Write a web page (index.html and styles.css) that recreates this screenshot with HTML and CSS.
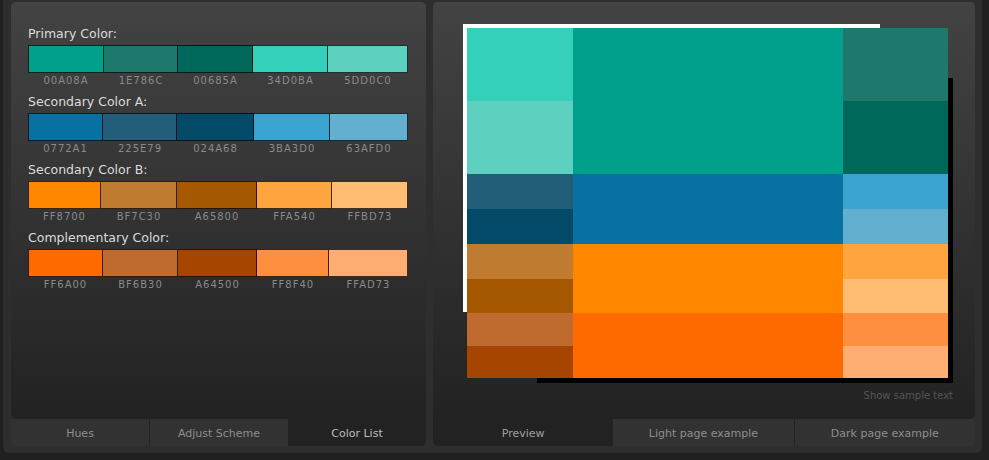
FILE: index.html
```html
<!DOCTYPE html>
<html>
<head>
<meta charset="utf-8">
<link rel="stylesheet" href="styles.css">
</head>
<body>
<div class="frame">
  <section class="panel panel-left">
    <div class="panel-body body-left">
      <div class="group">
        <div class="label">Primary Color:</div>
        <div class="swatches cols-1">
          <div class="cell"><div class="sw" style="background:#00A08A"></div><div class="hex">00A08A</div></div>
          <div class="cell"><div class="sw" style="background:#1E786C"></div><div class="hex">1E786C</div></div>
          <div class="cell"><div class="sw" style="background:#00685A"></div><div class="hex">00685A</div></div>
          <div class="cell"><div class="sw" style="background:#34D0BA"></div><div class="hex">34D0BA</div></div>
          <div class="cell"><div class="sw" style="background:#5DD0C0"></div><div class="hex">5DD0C0</div></div>
        </div>
      </div>
      <div class="group">
        <div class="label">Secondary Color A:</div>
        <div class="swatches cols-2">
          <div class="cell"><div class="sw" style="background:#0772A1"></div><div class="hex">0772A1</div></div>
          <div class="cell"><div class="sw" style="background:#225E79"></div><div class="hex">225E79</div></div>
          <div class="cell"><div class="sw" style="background:#024A68"></div><div class="hex">024A68</div></div>
          <div class="cell"><div class="sw" style="background:#3BA3D0"></div><div class="hex">3BA3D0</div></div>
          <div class="cell"><div class="sw" style="background:#63AFD0"></div><div class="hex">63AFD0</div></div>
        </div>
      </div>
      <div class="group">
        <div class="label">Secondary Color B:</div>
        <div class="swatches cols-3">
          <div class="cell"><div class="sw" style="background:#FF8700"></div><div class="hex">FF8700</div></div>
          <div class="cell"><div class="sw" style="background:#BF7C30"></div><div class="hex">BF7C30</div></div>
          <div class="cell"><div class="sw" style="background:#A65800"></div><div class="hex">A65800</div></div>
          <div class="cell"><div class="sw" style="background:#FFA540"></div><div class="hex">FFA540</div></div>
          <div class="cell"><div class="sw" style="background:#FFBD73"></div><div class="hex">FFBD73</div></div>
        </div>
      </div>
      <div class="group">
        <div class="label">Complementary Color:</div>
        <div class="swatches cols-4">
          <div class="cell"><div class="sw" style="background:#FF6A00"></div><div class="hex">FF6A00</div></div>
          <div class="cell"><div class="sw" style="background:#BF6B30"></div><div class="hex">BF6B30</div></div>
          <div class="cell"><div class="sw" style="background:#A64500"></div><div class="hex">A64500</div></div>
          <div class="cell"><div class="sw" style="background:#FF8F40"></div><div class="hex">FF8F40</div></div>
          <div class="cell"><div class="sw" style="background:#FFAD73"></div><div class="hex">FFAD73</div></div>
        </div>
      </div>
    </div>
    <nav class="tabs">
      <div class="tab sep">Hues</div>
      <div class="tab">Adjust Scheme</div>
      <div class="tab active active-right">Color List</div>
    </nav>
  </section>

  <section class="panel panel-right">
    <div class="panel-body body-right">
      <div class="preview">
        <div class="back-white"></div>
        <div class="back-black"></div>
        <div class="grid">
          <div class="c" style="grid-column:1;grid-row:1;background:#34D0BA"></div>
          <div class="c" style="grid-column:1;grid-row:2;background:#5DD0C0"></div>
          <div class="c" style="grid-column:2;grid-row:1 / 3;background:#00A08A"></div>
          <div class="c" style="grid-column:3;grid-row:1;background:#1E786C"></div>
          <div class="c" style="grid-column:3;grid-row:2;background:#00685A"></div>

          <div class="c" style="grid-column:1;grid-row:3;background:#225E79"></div>
          <div class="c" style="grid-column:1;grid-row:4;background:#024A68"></div>
          <div class="c" style="grid-column:2;grid-row:3 / 5;background:#0772A1"></div>
          <div class="c" style="grid-column:3;grid-row:3;background:#3BA3D0"></div>
          <div class="c" style="grid-column:3;grid-row:4;background:#63AFD0"></div>

          <div class="c" style="grid-column:1;grid-row:5;background:#BF7C30"></div>
          <div class="c" style="grid-column:1;grid-row:6;background:#A65800"></div>
          <div class="c" style="grid-column:2;grid-row:5 / 7;background:#FF8700"></div>
          <div class="c" style="grid-column:3;grid-row:5;background:#FFA540"></div>
          <div class="c" style="grid-column:3;grid-row:6;background:#FFBD73"></div>

          <div class="c" style="grid-column:1;grid-row:7;background:#BF6B30"></div>
          <div class="c" style="grid-column:1;grid-row:8;background:#A64500"></div>
          <div class="c" style="grid-column:2;grid-row:7 / 9;background:#FF6A00"></div>
          <div class="c" style="grid-column:3;grid-row:7;background:#FF8F40"></div>
          <div class="c" style="grid-column:3;grid-row:8;background:#FFAD73"></div>
        </div>
      </div>
      <div class="sample">Show sample text</div>
    </div>
    <nav class="tabs">
      <div class="tab active active-left">Preview</div>
      <div class="tab sep">Light page example</div>
      <div class="tab">Dark page example</div>
    </nav>
  </section>
</div>
</body>
</html>
```

FILE: styles.css
```css
html, body {
  margin: 0;
  padding: 0;
  background: #202020;
  height: 100%;
  overflow: hidden;
}

body {
  font-family: "DejaVu Sans", Verdana, sans-serif;
}

.frame {
  margin-left: 3px;
  width: 979px;
  box-sizing: border-box;
  padding: 2px 7px 7px 8px;
  background: #2e2e2e;
  border-radius: 0 0 6px 6px;
  display: flex;
  gap: 7px;
}

.panel {
  display: flex;
  flex-direction: column;
}

.panel-left { width: 415px; }
.panel-right { width: 542px; }

.panel-body {
  height: 417px;
  box-sizing: border-box;
  background: linear-gradient(#434343, #222222);
  border-radius: 5px;
}

.body-left {
  padding: 25px 18px 0 17px;
  border-bottom-right-radius: 0;
}

.body-right {
  padding: 26px 22px 0 34px;
  border-bottom-left-radius: 0;
  display: flex;
  flex-direction: column;
}

/* swatch groups */
.group { margin-bottom: 8px; }

.label {
  font-size: 12.5px;
  line-height: 14px;
  color: #dcdcdc;
  margin-bottom: 4px;
}

.swatches {
  display: grid;
}

.cols-1 { grid-template-columns: 76fr 74fr 75fr 75fr 80fr; }
.cols-2 { grid-template-columns: 75fr 74fr 77fr 76fr 78fr; }
.cols-3 { grid-template-columns: 73fr 76fr 80fr 75fr 76fr; }
.cols-4 { grid-template-columns: 75fr 75fr 79fr 72fr 79fr; }

.cell { min-width: 0; }

.sw {
  height: 26px;
  border-top: 1px solid rgba(0, 0, 0, 0.75);
  border-bottom: 1px solid rgba(0, 0, 0, 0.75);
  border-right: 1px solid rgba(0, 0, 0, 0.75);
}

.cell:first-child .sw { border-left: 1px solid rgba(0, 0, 0, 0.75); }

.hex {
  margin-top: 2px;
  font-size: 10px;
  line-height: 12px;
  letter-spacing: 1px;
  color: #8a8a8a;
  text-align: center;
}

/* tabs */
.tabs {
  display: flex;
  height: 27px;
  background: #323232;
  border-radius: 0 0 5px 5px;
}

.tab {
  flex: 1;
  display: flex;
  align-items: center;
  justify-content: center;
  font-size: 11px;
  color: #8e8e8e;
  padding-top: 1px;
  box-sizing: border-box;
}

.tab.sep { border-right: 1px solid #232323; }

.tab.active {
  background: #222222;
}

.active-right { border-radius: 0 0 5px 0; color: #bdbdbd; }
.active-left { border-radius: 0 0 0 5px; color: #a0a0a0; }

/* preview */
.preview {
  position: relative;
  width: 481px;
  height: 350px;
}

.back-white {
  position: absolute;
  left: -4px;
  top: -4px;
  width: 417px;
  height: 288px;
  background: #ffffff;
}

.back-black {
  position: absolute;
  left: 70px;
  top: 50px;
  right: -5px;
  bottom: -5px;
  background: #000000;
}

.grid {
  position: relative;
  display: grid;
  grid-template-columns: 106px 270px 105px;
  grid-template-rows: 73px 73px 35px 35px 35px 34px 33px 32px;
  width: 481px;
  height: 350px;
}

.sample {
  margin-top: 12px;
  align-self: flex-end;
  font-size: 10px;
  line-height: 12px;
  color: #555555;
}
```
